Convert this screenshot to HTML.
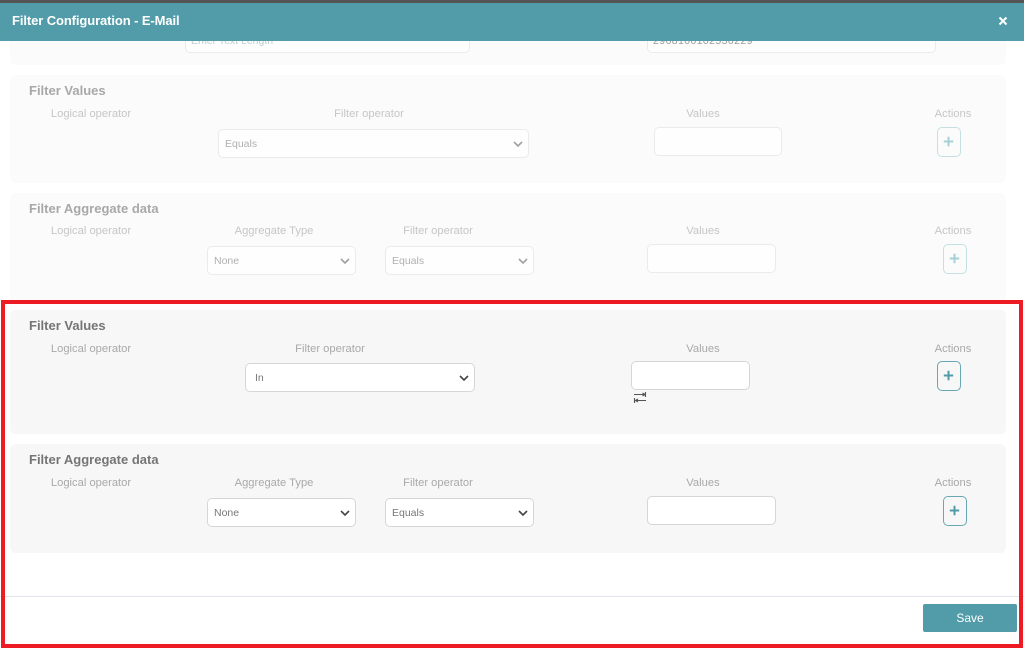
<!DOCTYPE html>
<html><head><meta charset="utf-8"><style>
html,body{margin:0;padding:0;background:#fff}
#p{position:relative;width:1024px;height:660px;overflow:hidden;background:#fff;font-family:"Liberation Sans",sans-serif}
#p div{position:absolute;box-sizing:border-box}
.pn{left:10px;width:996px;border-radius:6px}
.a{background:#fbfbfb}.b{background:#f7f7f7}
.h{font-size:13px;font-weight:bold;white-space:nowrap;line-height:16px}
.h.d{color:#757575}
.l{font-size:11.2px;line-height:14px;white-space:nowrap;text-align:center;transform:translateX(-50%)}
.l.f{color:#c6c6c6}.l.d{color:#a9a9a9}
.s,.i{border-radius:5px;font-size:10.5px;line-height:28px;white-space:nowrap}
.s.f,.i.f{background:#fefefe;border:1px solid #ebebeb;color:#b0b0b0}
.s.d,.i.d{background:#fff;border:1px solid #d6d6d6;color:#777}
.s svg{position:absolute;right:4.5px;top:10px}
.p{width:24px;height:30px;border-radius:5px;background:transparent}
.p.f{border:1.5px solid #c5e0e4}.p.d{border:1.5px solid #68a8b3}
.p svg{position:absolute;left:4.8px;top:7.7px}
</style></head><body><div id="p">

<div style="left:0;top:41px;width:1024px;height:619px;background:#fff"></div>

<div class="pn a" style="top:30px;height:35px"></div>
<div class="i f" style="left:185px;top:30px;width:285px;height:23px;color:#b9cfd6;line-height:20px;padding-left:5px;font-size:10.5px">Enter Text Length</div>
<div class="i f" style="left:647px;top:30px;width:289px;height:23px;line-height:20px;padding-left:5px;font-size:10.5px;letter-spacing:.4px;color:#999">2968100102550229</div>

<div class="pn a" style="top:75px;height:108px"></div>
<div class="h" style="left:29px;top:83px;color:#a8a8a8">Filter Values</div>
<div class="l f" style="left:91px;top:107px">Logical operator</div>
<div class="l f" style="left:369px;top:107px">Filter operator</div>
<div class="l f" style="left:703px;top:107px">Values</div>
<div class="l f" style="left:953px;top:107px">Actions</div>
<div class="s f" style="left:218px;top:129px;width:311px;height:29px;padding-left:6px">Equals<svg width="12" height="8" viewBox="0 0 12 8"><path d="M2 2l4 4 4-4" fill="none" stroke="#a0a0a0" stroke-width="1.6"/></svg></div>
<div class="i f" style="left:654px;top:127px;width:128px;height:29px"></div>
<div class="p f" style="left:937px;top:127px"><svg width="11" height="11" viewBox="0 0 11 11"><path d="M5.500 .8v9.400M.8 5.500h9.400" stroke="#a6d0d6" stroke-width="2"/></svg></div>

<div class="pn a" style="top:193px;height:110px"></div>
<div class="h" style="left:29px;top:201px;color:#a8a8a8">Filter Aggregate data</div>
<div class="l f" style="left:91px;top:224px">Logical operator</div>
<div class="l f" style="left:274px;top:224px">Aggregate Type</div>
<div class="l f" style="left:438px;top:224px">Filter operator</div>
<div class="l f" style="left:703px;top:224px">Values</div>
<div class="l f" style="left:953px;top:224px">Actions</div>
<div class="s f" style="left:207px;top:246px;width:149px;height:29px;padding-left:6px">None<svg width="12" height="8" viewBox="0 0 12 8"><path d="M2 2l4 4 4-4" fill="none" stroke="#a0a0a0" stroke-width="1.6"/></svg></div>
<div class="s f" style="left:385px;top:246px;width:149px;height:29px;padding-left:6px">Equals<svg width="12" height="8" viewBox="0 0 12 8"><path d="M2 2l4 4 4-4" fill="none" stroke="#a0a0a0" stroke-width="1.6"/></svg></div>
<div class="i f" style="left:647px;top:244px;width:129px;height:29px"></div>
<div class="p f" style="left:943px;top:244px"><svg width="11" height="11" viewBox="0 0 11 11"><path d="M5.500 .8v9.400M.8 5.500h9.400" stroke="#a6d0d6" stroke-width="2"/></svg></div>

<div style="left:1px;top:300px;width:1023px;height:348px;background:#fff"></div>

<div class="pn b" style="top:310px;height:124px"></div>
<div class="h d" style="left:29px;top:318px">Filter Values</div>
<div class="l d" style="left:91px;top:342px">Logical operator</div>
<div class="l d" style="left:330px;top:342px">Filter operator</div>
<div class="l d" style="left:703px;top:342px">Values</div>
<div class="l d" style="left:953px;top:342px">Actions</div>
<div class="s d" style="left:245px;top:363px;width:230px;height:29px;padding-left:9px">In<svg width="12" height="8" viewBox="0 0 12 8"><path d="M2 2l4 4 4-4" fill="none" stroke="#444" stroke-width="1.600"/></svg></div>
<div class="i d" style="left:631px;top:361px;width:119px;height:29px"></div>
<svg style="position:absolute;left:633px;top:391px" width="14" height="13" viewBox="0 0 14 13"><path d="M1 3.500h11M9.500 2L12 3.500 9.500 5M12.500 1v5M13 9.500H2.500M5 8L2.500 9.500 5 11M1.500 7v5" fill="none" stroke="#555" stroke-width="1.100"/></svg>
<div class="p d" style="left:937px;top:361px"><svg width="11" height="11" viewBox="0 0 11 11"><path d="M5.500 .8v9.400M.8 5.500h9.400" stroke="#519ca8" stroke-width="2"/></svg></div>

<div class="pn b" style="top:444px;height:109px"></div>
<div class="h d" style="left:29px;top:452px">Filter Aggregate data</div>
<div class="l d" style="left:91px;top:476px">Logical operator</div>
<div class="l d" style="left:274px;top:476px">Aggregate Type</div>
<div class="l d" style="left:438px;top:476px">Filter operator</div>
<div class="l d" style="left:703px;top:476px">Values</div>
<div class="l d" style="left:953px;top:476px">Actions</div>
<div class="s d" style="left:207px;top:498px;width:149px;height:29px;padding-left:6px">None<svg width="12" height="8" viewBox="0 0 12 8"><path d="M2 2l4 4 4-4" fill="none" stroke="#444" stroke-width="1.600"/></svg></div>
<div class="s d" style="left:385px;top:498px;width:149px;height:29px;padding-left:6px">Equals<svg width="12" height="8" viewBox="0 0 12 8"><path d="M2 2l4 4 4-4" fill="none" stroke="#444" stroke-width="1.600"/></svg></div>
<div class="i d" style="left:647px;top:496px;width:129px;height:29px"></div>
<div class="p d" style="left:943px;top:496px"><svg width="11" height="11" viewBox="0 0 11 11"><path d="M5.500 .8v9.400M.8 5.500h9.400" stroke="#519ca8" stroke-width="2"/></svg></div>

<div style="left:0;top:596px;width:1024px;height:1px;background:#e3e6ec"></div>
<div style="left:923px;top:604px;width:94px;height:28px;background:#519ca8;border-radius:2px;color:#fff;font-size:12px;line-height:28px;text-align:center">Save</div>

<div style="left:0;top:0;width:1024px;height:3px;background:#555"></div>
<div style="left:0;top:3px;width:1024px;height:38px;background:#519ca8"></div>
<div style="left:12px;top:13px;color:#fff;font-size:13px;font-weight:bold;line-height:16px;white-space:nowrap;letter-spacing:-.1px">Filter Configuration - E-Mail</div>
<svg style="position:absolute;left:998px;top:16px" width="10" height="10" viewBox="0 0 10 10"><path d="M1.500 1.500l7 7M8.500 1.500l-7 7" stroke="#fff" stroke-width="2"/></svg>

<div style="left:1px;top:300px;width:1022px;height:348px;border:4px solid #ed1c24;background:transparent"></div>
</div></body></html>
